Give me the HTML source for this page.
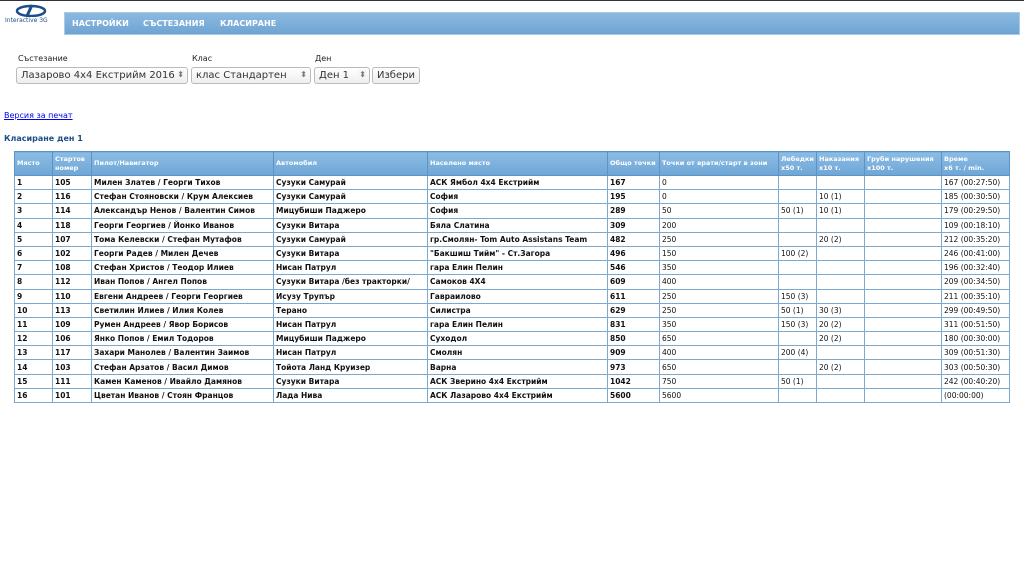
<!DOCTYPE html><html><head><meta charset="utf-8"><style>
body{margin:0;width:1024px;height:576px;background:#fff;font-family:"DejaVu Sans","Liberation Sans",sans-serif;position:relative;overflow:hidden}
.top{position:absolute;left:0;top:0;width:1024px;height:1px;background:#333}
.nav{position:absolute;left:64px;top:12px;width:956px;height:23px;background:linear-gradient(#8bbae0,#7fb0db 45%,#6ea3d2);border:1px solid #a9cbe9;box-sizing:border-box}
.nav span{position:absolute;top:6px;color:#fff;font-weight:bold;font-size:8px}
.lbl{position:absolute;top:54px;font-size:8px;color:#222}
.sel{position:absolute;top:67px;height:17px;border:1px solid #bbb;border-radius:3px;background:linear-gradient(#fff,#eee);box-sizing:border-box;font-size:10px;color:#333;padding:2px 0 0 4px;white-space:nowrap;overflow:hidden}
.sel i{position:absolute;right:3px;top:2px;font-style:normal;font-size:8px;color:#777;background:#f4f4f4}
a{position:absolute;left:4px;top:111px;font-size:8px;color:#00e;text-decoration:underline}
h3{position:absolute;left:4px;top:134px;margin:0;font-size:8px;color:#1d4d8a}
table{position:absolute;left:14px;top:151px;width:996px;border-collapse:collapse;font-size:7.5px;table-layout:fixed}
th{background:linear-gradient(#8bbce4,#6fa6d6);color:#fff;text-align:left;font-weight:bold;height:23px;padding:0 2px;border:1px solid #5b93c5;font-size:6.5px;line-height:9px;overflow:hidden;white-space:nowrap}
td{height:13.2px;padding:0 2px;border:1px solid #7ea9cf;border-top:none;color:#111;white-space:nowrap;overflow:hidden}
td.b{font-weight:bold}
</style></head><body>
<div class="top"></div>
<svg style="position:absolute;left:10px;top:3px" width="42" height="14" viewBox="0 0 42 14"><ellipse cx="21" cy="8" rx="14" ry="5" fill="none" stroke="#1d4d8a" stroke-width="2.5"/><path d="M17 13 L22 2" stroke="#1d4d8a" stroke-width="3"/></svg>
<div style="position:absolute;left:5px;top:17px;font-size:6px;color:#1d4d8a">Interactive 3G</div>
<div class="nav"><span style="left:7px">НАСТРОЙКИ</span><span style="left:78px">СЪСТЕЗАНИЯ</span><span style="left:155px">КЛАСИРАНЕ</span></div>
<div class="lbl" style="left:18px">Състезание</div><div class="lbl" style="left:192px">Клас</div><div class="lbl" style="left:315px">Ден</div>
<div class="sel" style="left:16px;width:172px">Лазарово 4x4 Екстрийм 2016<i>⬍</i></div>
<div class="sel" style="left:191px;width:120px">клас Стандартен<i>⬍</i></div>
<div class="sel" style="left:314px;width:56px">Ден 1<i>⬍</i></div>
<div class="sel" style="left:372px;width:48px">Избери</div>
<a>Версия за печат</a>
<h3>Класиране ден 1</h3>
<table>
<colgroup><col style="width:38px"><col style="width:39px"><col style="width:182px"><col style="width:154px"><col style="width:180px"><col style="width:52px"><col style="width:119px"><col style="width:38px"><col style="width:48px"><col style="width:77px"><col></colgroup>
<tr><th>Място</th><th>Стартов<br>номер</th><th>Пилот/Навигатор</th><th>Автомобил</th><th>Населено място</th><th>Общо точки</th><th>Точки от врати/старт в зони</th><th>Лебедки<br>x50 т.</th><th>Наказания<br>x10 т.</th><th>Груби нарушения<br>x100 т.</th><th>Време<br>x6 т. / min.</th></tr>
<tr><td class="b">1</td><td class="b">105</td><td class="b">Милен Златев / Георги Тихов</td><td class="b">Сузуки Самурай</td><td class="b">АСК Ямбол 4x4 Екстрийм</td><td class="b">167</td><td>0</td><td></td><td></td><td></td><td>167 (00:27:50)</td></tr>
<tr><td class="b">2</td><td class="b">116</td><td class="b">Стефан Стояновски / Крум Алексиев</td><td class="b">Сузуки Самурай</td><td class="b">София</td><td class="b">195</td><td>0</td><td></td><td>10 (1)</td><td></td><td>185 (00:30:50)</td></tr>
<tr><td class="b">3</td><td class="b">114</td><td class="b">Александър Ненов / Валентин Симов</td><td class="b">Мицубиши Паджеро</td><td class="b">София</td><td class="b">289</td><td>50</td><td>50 (1)</td><td>10 (1)</td><td></td><td>179 (00:29:50)</td></tr>
<tr><td class="b">4</td><td class="b">118</td><td class="b">Георги Георгиев / Йонко Иванов</td><td class="b">Сузуки Витара</td><td class="b">Бяла Слатина</td><td class="b">309</td><td>200</td><td></td><td></td><td></td><td>109 (00:18:10)</td></tr>
<tr><td class="b">5</td><td class="b">107</td><td class="b">Тома Келевски / Стефан Мутафов</td><td class="b">Сузуки Самурай</td><td class="b">гр.Смолян- Tom Auto Assistans Team</td><td class="b">482</td><td>250</td><td></td><td>20 (2)</td><td></td><td>212 (00:35:20)</td></tr>
<tr><td class="b">6</td><td class="b">102</td><td class="b">Георги Радев / Милен Дечев</td><td class="b">Сузуки Витара</td><td class="b">"Бакшиш Тийм" - Ст.Загора</td><td class="b">496</td><td>150</td><td>100 (2)</td><td></td><td></td><td>246 (00:41:00)</td></tr>
<tr><td class="b">7</td><td class="b">108</td><td class="b">Стефан Христов / Теодор Илиев</td><td class="b">Нисан Патрул</td><td class="b">гара Елин Пелин</td><td class="b">546</td><td>350</td><td></td><td></td><td></td><td>196 (00:32:40)</td></tr>
<tr><td class="b">8</td><td class="b">112</td><td class="b">Иван Попов / Ангел Попов</td><td class="b">Сузуки Витара /без тракторки/</td><td class="b">Самоков 4X4</td><td class="b">609</td><td>400</td><td></td><td></td><td></td><td>209 (00:34:50)</td></tr>
<tr><td class="b">9</td><td class="b">110</td><td class="b">Евгени Андреев / Георги Георгиев</td><td class="b">Исузу Трупър</td><td class="b">Гавраилово</td><td class="b">611</td><td>250</td><td>150 (3)</td><td></td><td></td><td>211 (00:35:10)</td></tr>
<tr><td class="b">10</td><td class="b">113</td><td class="b">Светилин Илиев / Илия Колев</td><td class="b">Терано</td><td class="b">Силистра</td><td class="b">629</td><td>250</td><td>50 (1)</td><td>30 (3)</td><td></td><td>299 (00:49:50)</td></tr>
<tr><td class="b">11</td><td class="b">109</td><td class="b">Румен Андреев / Явор Борисов</td><td class="b">Нисан Патрул</td><td class="b">гара Елин Пелин</td><td class="b">831</td><td>350</td><td>150 (3)</td><td>20 (2)</td><td></td><td>311 (00:51:50)</td></tr>
<tr><td class="b">12</td><td class="b">106</td><td class="b">Янко Попов / Емил Тодоров</td><td class="b">Мицубиши Паджеро</td><td class="b">Суходол</td><td class="b">850</td><td>650</td><td></td><td>20 (2)</td><td></td><td>180 (00:30:00)</td></tr>
<tr><td class="b">13</td><td class="b">117</td><td class="b">Захари Манолев / Валентин Заимов</td><td class="b">Нисан Патрул</td><td class="b">Смолян</td><td class="b">909</td><td>400</td><td>200 (4)</td><td></td><td></td><td>309 (00:51:30)</td></tr>
<tr><td class="b">14</td><td class="b">103</td><td class="b">Стефан Арзатов / Васил Димов</td><td class="b">Тойота Ланд Круизер</td><td class="b">Варна</td><td class="b">973</td><td>650</td><td></td><td>20 (2)</td><td></td><td>303 (00:50:30)</td></tr>
<tr><td class="b">15</td><td class="b">111</td><td class="b">Камен Каменов / Ивайло Дамянов</td><td class="b">Сузуки Витара</td><td class="b">АСК Зверино 4x4 Екстрийм</td><td class="b">1042</td><td>750</td><td>50 (1)</td><td></td><td></td><td>242 (00:40:20)</td></tr>
<tr><td class="b">16</td><td class="b">101</td><td class="b">Цветан Иванов / Стоян Францов</td><td class="b">Лада Нива</td><td class="b">АСК Лазарово 4x4 Екстрийм</td><td class="b">5600</td><td>5600</td><td></td><td></td><td></td><td>(00:00:00)</td></tr>
</table>
</body></html>
